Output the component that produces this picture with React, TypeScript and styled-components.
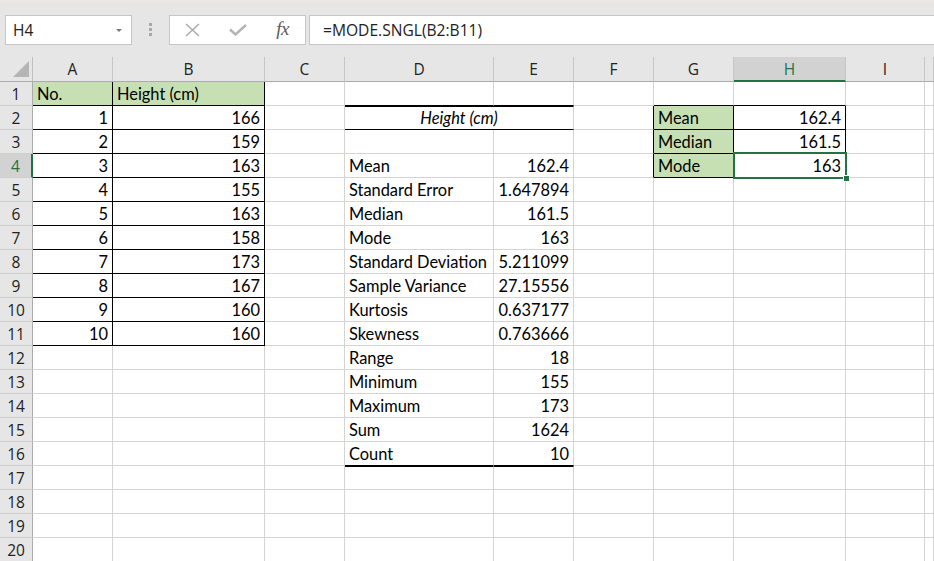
import React from "react";
import styled, { createGlobalStyle } from "styled-components";

const GlobalStyle = createGlobalStyle`
  html, body { margin: 0; padding: 0; background: #ffffff; overflow: hidden; }
  #root { width: 934px; height: 561px; }
`;

const GRID = "#d4d4d4";
const BLACK = "#000000";
const GREEN_FILL = "#c6e0b4";
const SEL = "#217346";

const Page = styled.div`
  width: 934px;
  height: 561px;
  overflow: hidden;
  display: flex;
  flex-direction: column;
  background: #ffffff;
`;

const Toolbar = styled.div`
  height: 57px;
  flex: none;
  box-sizing: border-box;
  padding: 15px 0 0 5px;
  display: flex;
  align-items: flex-start;
  background: linear-gradient(#ece8e3 0px, #e6e6e6 5px, #e6e6e6 100%);
`;

const Box = styled.div<{ $w?: number; $ml?: number; $grow?: boolean }>`
  box-sizing: border-box;
  height: 30px;
  width: ${(p) => (p.$w ? `${p.$w}px` : "auto")};
  flex: ${(p) => (p.$grow ? "1 0 auto" : "none")};
  margin-left: ${(p) => p.$ml ?? 0}px;
  margin-right: ${(p) => (p.$grow ? "-4px" : "0")};
  background: #ffffff;
  border: 1px solid #c6c6c6;
  display: flex;
  align-items: center;
  position: relative;
`;

const NameText = styled.span`
  font-family: "Open Sans", "Noto Sans", sans-serif;
  font-size: 15.5px;
  color: #222222;
  padding-left: 7px;
  flex: 1;
`;

const DropArrow = styled.span`
  width: 0;
  height: 0;
  border-left: 3.5px solid transparent;
  border-right: 3.5px solid transparent;
  border-top: 3.5px solid #7a7a7a;
  margin-right: 9px;
  margin-top: 1px;
`;

const Dots = styled.div`
  margin-left: 17px;
  margin-top: 8px;
  display: flex;
  flex-direction: column;
  gap: 2px;
`;

const Dot = styled.span`
  width: 3px;
  height: 3px;
  background: #a8a8a8;
`;

const IconSlot = styled.div`
  width: 45px;
  height: 100%;
  display: flex;
  align-items: center;
  justify-content: center;
`;

const FxText = styled.span`
  font-family: "Liberation Serif", "DejaVu Serif", serif;
  font-style: italic;
  font-size: 19px;
  color: #5b5b5b;
  letter-spacing: -0.5px;
  margin-top: -2px;
`;

const FormulaText = styled.span`
  font-family: "Open Sans", "Noto Sans", sans-serif;
  font-size: 15.6px;
  color: #222222;
  padding-left: 13px;
`;

const Sheet = styled.div`
  flex: none;
  display: grid;
  grid-template-columns: 33px 80px 152px 80px 149px 80px 80px 80px 112px 79px 1fr;
  grid-template-rows: 25px repeat(20, 24px);
`;

const Corner = styled.div`
  box-sizing: border-box;
  background: #e6e6e6;
  border-right: 1px solid #c0c0c0;
  border-bottom: 1px solid #ababab;
  display: flex;
  align-items: flex-end;
  justify-content: flex-end;
  padding: 0 3px 4px 0;
`;

const Triangle = styled.span`
  width: 0;
  height: 0;
  border-left: 16px solid transparent;
  border-bottom: 16px solid #b5b5b5;
`;

const ColHead = styled.div<{ $active?: boolean }>`
  box-sizing: border-box;
  background: ${(p) => (p.$active ? "#d2d2d2" : "#e6e6e6")};
  border-right: 1px solid #c6c6c6;
  border-bottom: ${(p) => (p.$active ? `2px solid ${SEL}` : "1px solid #ababab")};
  color: ${(p) => (p.$active ? SEL : "#222222")};
  font-family: "Open Sans", "Noto Sans", sans-serif;
  font-size: 15.5px;
  display: flex;
  align-items: center;
  justify-content: center;
  padding-top: ${(p) => (p.$active ? "1px" : "0")};
`;

const RowHead = styled.div<{ $active?: boolean }>`
  box-sizing: border-box;
  background: ${(p) => (p.$active ? "#d2d2d2" : "#e6e6e6")};
  border-right: ${(p) => (p.$active ? `2px solid ${SEL}` : "1px solid #ababab")};
  border-bottom: 1px solid #cfcfcf;
  color: ${(p) => (p.$active ? SEL : "#222222")};
  font-family: "Open Sans", "Noto Sans", sans-serif;
  font-size: 15.5px;
  display: flex;
  align-items: center;
  justify-content: center;
  padding-top: 1px;
`;

type Align = "left" | "right" | "center";

const Cell = styled.div<{
  $align?: Align;
  $fill?: string;
  $br?: string;
  $bb?: string;
  $bt?: string;
  $italic?: boolean;
  $span?: number;
  $selected?: boolean;
}>`
  box-sizing: border-box;
  position: relative;
  z-index: ${(p) => (p.$selected ? 5 : "auto")};
  grid-column: span ${(p) => p.$span ?? 1};
  background: ${(p) => p.$fill ?? "#ffffff"};
  border-right: 1px solid ${(p) => p.$br ?? GRID};
  border-bottom: 1px solid ${(p) => p.$bb ?? GRID};
  ${(p) => (p.$bt ? `border-top: 1px solid ${p.$bt};` : "")}
  display: flex;
  align-items: flex-end;
  justify-content: ${(p) =>
    p.$align === "right" ? "flex-end" : p.$align === "center" ? "center" : "flex-start"};
  padding: 0 4px 1px 4px;
  font-family: "Lato", "Carlito", sans-serif;
  font-size: 16.4px;
  font-style: ${(p) => (p.$italic ? "italic" : "normal")};
  color: #000000;
  white-space: nowrap;
  line-height: 20px;
`;

const SelectionFrame = styled.span`
  position: absolute;
  z-index: 6;
  top: -2px;
  left: -1px;
  right: -2px;
  bottom: -2px;
  border: 2px solid ${SEL};
  pointer-events: none;
`;

const FillHandle = styled.span`
  position: absolute;
  right: -5px;
  bottom: -5px;
  width: 5px;
  height: 5px;
  background: ${SEL};
  border: 1px solid #ffffff;
`;

type CellSpec = {
  text?: string;
  align?: Align;
  fill?: string;
  br?: string;
  bb?: string;
  bt?: string;
  italic?: boolean;
  span?: number;
  selected?: boolean;
  skip?: boolean;
};

const COLS = ["A", "B", "C", "D", "E", "F", "G", "H", "I", "J"];
const heights = [166, 159, 163, 155, 163, 158, 173, 167, 160, 160];
const stats: [string, string][] = [
  ["Mean", "162.4"],
  ["Standard Error", "1.647894"],
  ["Median", "161.5"],
  ["Mode", "163"],
  ["Standard Deviation", "5.211099"],
  ["Sample Variance", "27.15556"],
  ["Kurtosis", "0.637177"],
  ["Skewness", "0.763666"],
  ["Range", "18"],
  ["Minimum", "155"],
  ["Maximum", "173"],
  ["Sum", "1624"],
  ["Count", "10"],
];
const summary: [string, string][] = [
  ["Mean", "162.4"],
  ["Median", "161.5"],
  ["Mode", "163"],
];

function buildRow(r: number): Record<string, CellSpec> {
  const row: Record<string, CellSpec> = {};
  COLS.forEach((c) => (row[c] = {}));

  // Table A1:B11
  if (r === 1) {
    row.A = { text: "No.", fill: GREEN_FILL, br: BLACK, bb: BLACK };
    row.B = { text: "Height (cm)", fill: GREEN_FILL, br: BLACK, bb: BLACK };
  } else if (r <= 11) {
    row.A = { text: String(r - 1), align: "right", br: BLACK, bb: BLACK };
    row.B = { text: String(heights[r - 2]), align: "right", br: BLACK, bb: BLACK };
  }

  // Descriptive statistics D:E
  if (r === 1) {
    row.D = { bb: BLACK };
    row.E = { bb: BLACK };
  } else if (r === 2) {
    row.D = { text: "Height (cm)", italic: true, align: "center", span: 2, bt: BLACK, bb: BLACK };
    row.E = { skip: true };
  } else if (r >= 4 && r <= 16) {
    const [label, value] = stats[r - 4];
    const bb = r === 16 ? BLACK : undefined;
    row.D = { text: label, bb };
    row.E = { text: value, align: "right", bb };
  } else if (r === 17) {
    row.D = { bt: BLACK };
    row.E = { bt: BLACK };
  }

  // Summary G2:H4
  if (r === 1) {
    row.G = { bb: BLACK };
    row.H = { bb: BLACK };
  } else if (r >= 2 && r <= 4) {
    const [label, value] = summary[r - 2];
    row.F = { br: BLACK };
    row.G = { text: label, fill: GREEN_FILL, br: BLACK, bb: BLACK };
    row.H = { text: value, align: "right", br: BLACK, bb: BLACK, selected: r === 4 };
  }
  return row;
}

const rows = Array.from({ length: 20 }, (_, i) => i + 1);
const headers = ["A", "B", "C", "D", "E", "F", "G", "H", "I", ""];

export default function App() {
  return (
    <Page>
      <GlobalStyle />
      <Toolbar>
        <Box $w={127}>
          <NameText>H4</NameText>
          <DropArrow />
        </Box>
        <Dots>
          <Dot />
          <Dot />
          <Dot />
        </Dots>
        <Box $w={137} $ml={17}>
          <IconSlot>
            <svg width="15" height="14" viewBox="0 0 15 14">
              <path d="M1 1 L14 13 M14 1 L1 13" stroke="#a9a9a9" strokeWidth="1.4" fill="none" />
            </svg>
          </IconSlot>
          <IconSlot>
            <svg width="18" height="12" viewBox="0 0 18 12">
              <path d="M1 5.5 L6.5 10.5 L17 1" stroke="#b3b3b3" strokeWidth="2.4" fill="none" />
            </svg>
          </IconSlot>
          <IconSlot>
            <FxText>fx</FxText>
          </IconSlot>
        </Box>
        <Box $ml={3} $grow>
          <FormulaText>=MODE.SNGL(B2:B11)</FormulaText>
        </Box>
      </Toolbar>
      <Sheet>
        <Corner>
          <Triangle />
        </Corner>
        {headers.map((h, i) => (
          <ColHead key={`h${i}`} $active={h === "H"}>
            {h}
          </ColHead>
        ))}
        {rows.map((r) => {
          const spec = buildRow(r);
          return (
            <React.Fragment key={r}>
              <RowHead $active={r === 4}>{r}</RowHead>
              {COLS.map((c) => {
                const s = spec[c];
                if (s.skip) return null;
                return (
                  <Cell
                    key={c}
                    $align={s.align}
                    $fill={s.fill}
                    $br={s.br}
                    $bb={s.bb}
                    $bt={s.bt}
                    $italic={s.italic}
                    $span={s.span}
                    $selected={s.selected}
                  >
                    {s.text}
                    {s.selected && (
                      <SelectionFrame>
                        <FillHandle />
                      </SelectionFrame>
                    )}
                  </Cell>
                );
              })}
            </React.Fragment>
          );
        })}
      </Sheet>
    </Page>
  );
}
